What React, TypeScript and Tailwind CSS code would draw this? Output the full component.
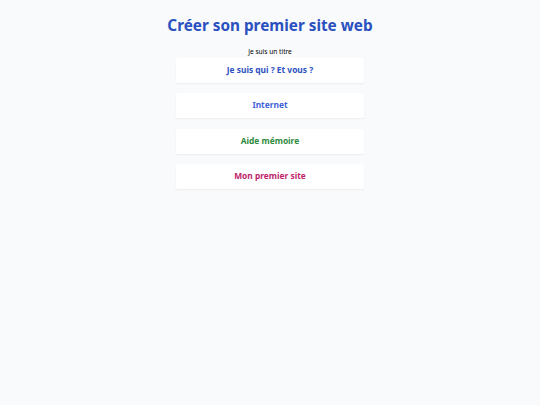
export default function App() {
  const items = [
    { label: "Je suis qui ? Et vous ?", color: "text-[#2b50c0]" },
    { label: "Internet", color: "text-[#3f5fd8]" },
    { label: "Aide mémoire", color: "text-[#2d8a3c]" },
    { label: "Mon premier site", color: "text-[#c0246a]" },
  ];

  return (
    <div
      className="min-h-[405px] w-full bg-[#f8fafc] flex flex-col items-center"
      style={{ fontFamily: '"Noto Sans", sans-serif' }}
    >
      <h1 className="mt-[13px] text-[15.3px] leading-[24px] font-bold text-[#2b50c0]">
        Créer son premier site web
      </h1>
      <p className="mt-[10px] text-[6.6px] leading-[10px] text-black">Je suis un titre</p>
      <div className="mt-[1px] flex flex-col gap-[10.3px] w-[188px]">
        {items.map((it) => (
          <div
            key={it.label}
            className={`h-[25px] flex items-center justify-center bg-white rounded-[2px] shadow-[0_1px_2px_rgba(0,0,0,0.06)] text-[8.4px] font-bold ${it.color}`}
          >
            {it.label}
          </div>
        ))}
      </div>
    </div>
  );
}
